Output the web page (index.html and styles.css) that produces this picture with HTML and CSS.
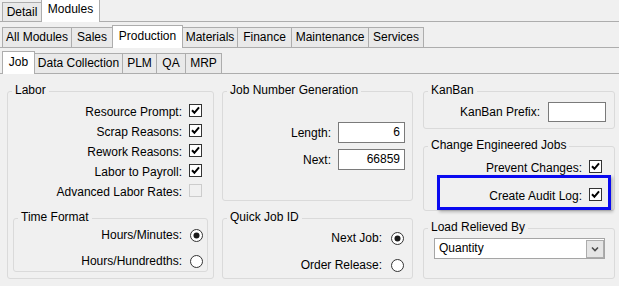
FILE: index.html
```html
<!DOCTYPE html>
<html>
<head>
<meta charset="utf-8">
<link rel="stylesheet" href="styles.css">
</head>
<body>
<div class="tabs tabs-1">
  <div class="tab t-detail">Detail</div>
  <div class="tab sel t-modules">Modules</div>
</div>
<div class="tabs tabs-2">
  <div class="tab t-all">All Modules</div>
  <div class="tab t-sales">Sales</div>
  <div class="tab sel t-prod">Production</div>
  <div class="tab t-mat">Materials</div>
  <div class="tab t-fin">Finance</div>
  <div class="tab t-maint">Maintenance</div>
  <div class="tab t-serv">Services</div>
</div>
<div class="tabs tabs-3">
  <div class="tab sel t-job">Job</div>
  <div class="tab t-dc">Data Collection</div>
  <div class="tab t-plm">PLM</div>
  <div class="tab t-qa">QA</div>
  <div class="tab t-mrp">MRP</div>
</div>

<div class="page">
  <div class="col col-1">
    <div class="group g-labor">
      <div class="gtitle">Labor</div>
      <div class="rows labor-rows">
        <div class="row"><span>Resource Prompt:</span><svg class="cb" width="13" height="13" viewBox="0 0 13 13"><rect x="0.5" y="0.5" width="12" height="12" fill="#fff" stroke="#333"/><path d="M3 6.3 5.4 8.8 10 3.4" fill="none" stroke="#000" stroke-width="2"/></svg></div>
        <div class="row"><span>Scrap Reasons:</span><svg class="cb" width="13" height="13" viewBox="0 0 13 13"><rect x="0.5" y="0.5" width="12" height="12" fill="#fff" stroke="#333"/><path d="M3 6.3 5.4 8.8 10 3.4" fill="none" stroke="#000" stroke-width="2"/></svg></div>
        <div class="row"><span>Rework Reasons:</span><svg class="cb" width="13" height="13" viewBox="0 0 13 13"><rect x="0.5" y="0.5" width="12" height="12" fill="#fff" stroke="#333"/><path d="M3 6.3 5.4 8.8 10 3.4" fill="none" stroke="#000" stroke-width="2"/></svg></div>
        <div class="row"><span>Labor to Payroll:</span><svg class="cb" width="13" height="13" viewBox="0 0 13 13"><rect x="0.5" y="0.5" width="12" height="12" fill="#fff" stroke="#333"/><path d="M3 6.3 5.4 8.8 10 3.4" fill="none" stroke="#000" stroke-width="2"/></svg></div>
        <div class="row"><span>Advanced Labor Rates:</span><svg class="cb" width="13" height="13" viewBox="0 0 13 13"><rect x="0.5" y="0.5" width="12" height="12" fill="#f0f0f0" stroke="#cccccc"/></svg></div>
      </div>
      <div class="group g-time">
        <div class="gtitle">Time Format</div>
        <div class="radio-rows time-rows">
          <div class="row"><span>Hours/Minutes:</span><svg class="rb" width="13" height="13" viewBox="0 0 13 13"><circle cx="6.5" cy="6.5" r="6" fill="#fff" stroke="#333"/><circle cx="6.5" cy="6.5" r="3" fill="#1a1a1a"/></svg></div>
          <div class="row"><span>Hours/Hundredths:</span><svg class="rb" width="13" height="13" viewBox="0 0 13 13"><circle cx="6.5" cy="6.5" r="6" fill="#fff" stroke="#333"/></svg></div>
        </div>
      </div>
    </div>
  </div>

  <div class="col col-2">
    <div class="group g-jobnum">
      <div class="gtitle">Job Number Generation</div>
      <div class="field-rows">
        <div class="frow"><span>Length:</span><div class="input num">6</div></div>
        <div class="frow"><span>Next:</span><div class="input num">66859</div></div>
      </div>
    </div>
    <div class="group g-quick">
      <div class="gtitle">Quick Job ID</div>
      <div class="radio-rows quick-rows">
        <div class="row"><span>Next Job:</span><svg class="rb" width="13" height="13" viewBox="0 0 13 13"><circle cx="6.5" cy="6.5" r="6" fill="#fff" stroke="#333"/><circle cx="6.5" cy="6.5" r="3" fill="#1a1a1a"/></svg></div>
        <div class="row"><span>Order Release:</span><svg class="rb" width="13" height="13" viewBox="0 0 13 13"><circle cx="6.5" cy="6.5" r="6" fill="#fff" stroke="#333"/></svg></div>
      </div>
    </div>
  </div>

  <div class="col col-3">
    <div class="group g-kanban">
      <div class="gtitle">KanBan</div>
      <div class="frow kanban-row"><span>KanBan Prefix:</span><div class="input prefix"></div></div>
    </div>
    <div class="group g-change">
      <div class="gtitle">Change Engineered Jobs</div>
      <div class="rows change-rows">
        <div class="row"><span>Prevent Changes:</span><svg class="cb" width="13" height="13" viewBox="0 0 13 13"><rect x="0.5" y="0.5" width="12" height="12" fill="#fff" stroke="#333"/><path d="M3 6.3 5.4 8.8 10 3.4" fill="none" stroke="#000" stroke-width="2"/></svg></div>
        <div class="row"><span>Create Audit Log:</span><svg class="cb" width="13" height="13" viewBox="0 0 13 13"><rect x="0.5" y="0.5" width="12" height="12" fill="#fff" stroke="#333"/><path d="M3 6.3 5.4 8.8 10 3.4" fill="none" stroke="#000" stroke-width="2"/></svg></div>
      </div>
      <div class="highlight"></div>
    </div>
    <div class="group g-load">
      <div class="gtitle">Load Relieved By</div>
      <div class="combo">
        <span class="combo-text">Quantity</span>
        <span class="combo-btn"><svg width="16" height="16" viewBox="0 0 16 16"><path d="M5 6.5 8 9.5 11 6.5" fill="none" stroke="#4a4a4a" stroke-width="1.6"/></svg></span>
      </div>
    </div>
  </div>
</div>
</body>
</html>
```

FILE: styles.css
```css
html, body {
  margin: 0;
  padding: 0;
}
body {
  width: 619px;
  height: 286px;
  overflow: hidden;
  background: #f0f0f0;
  color: #000;
  font-family: "Liberation Sans", Arial, sans-serif;
  font-size: 12px;
}

/* ---------- tab strips ---------- */
.tabs {
  display: flex;
  align-items: flex-end;
  padding-left: 2px;
  border-bottom: 1px solid #adadad;
}
.tabs-1 { height: 21px; }
.tabs-2 { height: 25px; }
.tabs-3 { height: 25px; }

.tab {
  box-sizing: border-box;
  height: 20px;
  line-height: 19px;
  text-align: center;
  white-space: nowrap;
  background: #e9e9e9;
  border: 1px solid #adadad;
  border-bottom: none;
  margin-right: -1px;
}
.tab.sel {
  height: 23px;
  padding-top: 1px;
  margin-bottom: -1px;
  background: #ffffff;
  position: relative;
  z-index: 1;
}
.tabs-1 .tab { height: 19px; line-height: 18px; }
.tabs-1 .tab.sel { height: 22px; line-height: 19px; padding-top: 0; border-top: none; }

.t-detail { width: 40px; }
.t-modules { width: 59px; }
.t-all { width: 70px; }
.t-sales { width: 42px; }
.t-prod { width: 71px; }
.t-mat { width: 56px; }
.t-fin { width: 55px; }
.t-maint { width: 78px; }
.t-serv { width: 56px; }
.t-job { width: 33px; }
.t-dc { width: 89px; }
.t-plm { width: 35px; }
.t-qa { width: 30px; }
.t-mrp { width: 37px; }

/* ---------- page ---------- */
.page {
  display: flex;
  align-items: flex-start;
  padding: 17px 0 0 7px;
}
.col {
  display: flex;
  flex-direction: column;
  gap: 17px;
}
.col-1 { width: 207px; margin-right: 8px; }
.col-2 { width: 191px; margin-right: 10px; }
.col-3 { width: 192px; }

.group {
  box-sizing: border-box;
  border: 1px solid #dadada;
  border-radius: 3px;
}
.gtitle {
  width: fit-content;
  margin: -9px 0 0 4px;
  padding: 0 3px;
  line-height: 15px;
  background: #f0f0f0;
  white-space: nowrap;
}

.g-labor { height: 188px; }
.g-time { height: 54px; margin: 16px 5px 0; }
.g-jobnum { height: 110px; }
.g-quick { height: 61px; }
.g-kanban { height: 38px; }
.g-change { height: 65px; position: relative; }
.g-load { height: 51px; }

/* checkbox / radio rows */
.row {
  display: flex;
  justify-content: flex-end;
  align-items: flex-start;
  height: 20px;
  line-height: 20px;
  white-space: nowrap;
}
.cb { flex: none; margin: 2px 0 0 7px; }
.rb { flex: none; margin: 4px 0 0 8px; }

.labor-rows { margin-top: 4px; }
.labor-rows .cb { margin-right: 11px; }

.time-rows { display: flex; flex-direction: column; gap: 6px; }
.time-rows .rb { margin-right: 4px; }

.quick-rows { display: flex; flex-direction: column; gap: 7px; margin-top: 3px; }
.quick-rows .rb { margin-left: 9px; margin-right: 8px; }

.change-rows { display: flex; flex-direction: column; gap: 8px; margin-top: 5px; }
.change-rows .cb { margin-right: 12px; }

/* text fields */
.field-rows {
  display: flex;
  flex-direction: column;
  gap: 6px;
  margin-top: 24px;
}
.frow {
  display: flex;
  justify-content: flex-end;
  align-items: center;
  white-space: nowrap;
}
.frow span { margin-right: 7px; }
.input {
  box-sizing: border-box;
  background: #fff;
  border: 1px solid #7a7a7a;
}
.num {
  width: 67px;
  height: 21px;
  line-height: 19px;
  padding-right: 4px;
  text-align: right;
  margin-right: 7px;
}
.kanban-row { margin-top: 4px; }
.kanban-row span { margin-right: 8px; }
.prefix {
  width: 58px;
  height: 20px;
  margin-right: 8px;
}

/* highlight annotation overlaying the audit row */
.highlight {
  position: absolute;
  left: 13px;
  top: 28px;
  width: 174px;
  height: 35px;
  box-sizing: border-box;
  border: 3px solid #0a0af0;
  box-shadow: 2px 2px 3px rgba(0, 0, 0, 0.25);
}

/* combo */
.combo {
  box-sizing: border-box;
  display: flex;
  justify-content: space-between;
  align-items: flex-start;
  width: 171px;
  height: 21px;
  margin: 3px 0 0 10px;
  background: #fff;
  border: 1px solid #a5a5a5;
}
.combo-text {
  line-height: 19px;
  padding-left: 4px;
}
.combo-btn {
  box-sizing: border-box;
  display: flex;
  align-items: center;
  justify-content: center;
  width: 18px;
  height: 18px;
  margin-top: 1px;
  background: #e5e5e5;
  border: 1px solid #acacac;
}
```
